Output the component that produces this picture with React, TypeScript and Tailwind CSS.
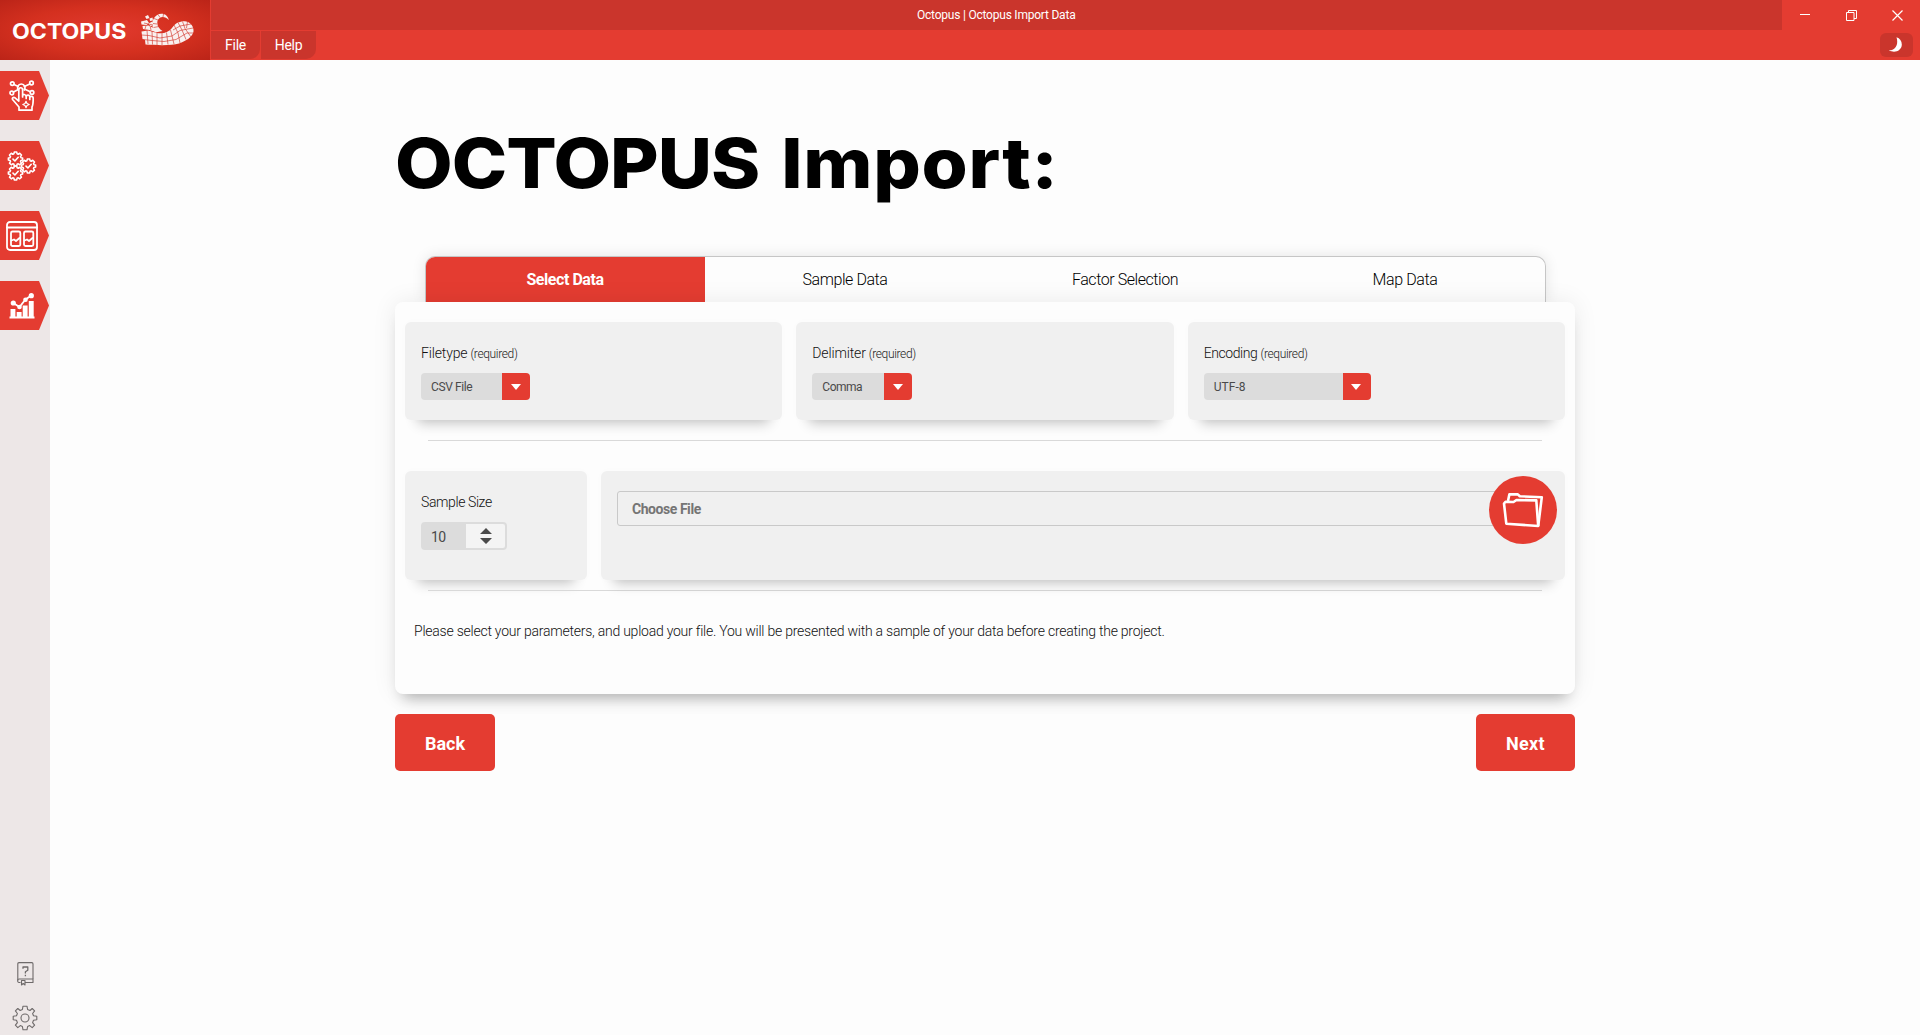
import type { ReactNode } from "react";

function Tentacle() {
  return (
    <svg width="54" height="33" viewBox="0 0 54 33" fill="none">
      <path
        d="M1.500 18.500 L8 17.500 L17 20 C24 21 29 19 32 15 C35 10 40 8 45 8.200 C51 9 54 14 53.500 18.500 C52.500 24 46 28 39 30.500 C32 32.500 20 32.500 5.500 31.500 L5 27 L2.500 26 Z"
        fill="#f9f0ef"
      />
      <path d="M28.800 7 C25 2.500 19 3 17.500 8 C16.500 12.500 19 15.500 22.500 18 L15.500 19.500 C12 15 11.500 10.500 13.300 6.500 C16.500 -1 27 -1.500 28.800 7 Z" fill="#f9f0ef" />
      <path d="M5 3.500 l3 -1.500 l1.500 3 l-3 1 Z M9.500 5.500 l3 -1 l.5 3 l-3 .5 Z M1 8.500 l6 -1.500 l2 3 l-2.500 2 l-5 -.5 Z M8.500 10.500 l4 -2 l1 3 l-3 2 Z M2.500 13 l6 -.5 l6 3 l1 3.500 l-6 -2 l-6.500 -1 Z" fill="#f9f0ef" />
      <path
        d="M1.500 22 L9 22.500 L20 25 L32 23 L40 17.500 L53 15 M3 26.500 L12 27.500 L24 28.500 L36 26.500 L47 20 L53 20 M7 17 L8 31 M12 18 L12.500 31.500 M17 19.500 L17 32 M22 20 L22 32 M26.500 19.500 L28 31.500 M30.500 17 L34 31 M34 12 L38 20 L40 30 M38 9.500 L42 17 L46 26.500 M42.500 8.500 L45 15.500 L51 24 M47.500 8.500 L46.500 15 M33 17 L40 13 L51 11 M13 10.500 L17 11 M14 5.500 L18 7 M18 1.500 L20 4.500 M23.500 .8 L23 4 M13.500 14.500 L19 13.500 M4 10 L13 12 M6 12.500 L5 16 M10 12.500 L11 17"
        stroke="#d2362b"
        strokeWidth=".65"
      />
    </svg>
  );
}

function TouchIcon() {
  return (
    <svg width="26" height="31" viewBox="0 0 26 31" fill="none" stroke="#fff" strokeWidth="1.700" strokeLinejoin="round" strokeLinecap="round">
      <circle cx="3.300" cy="3.600" r="1.800" />
      <circle cx="22.500" cy="3" r="1.800" />
      <circle cx="2.800" cy="13" r="1.800" />
      <circle cx="23" cy="12.500" r="1.800" />
      <path d="M9.300 10 C7.500 7.500 9 4 12.300 4 C15.600 4 17 7.500 15.300 10" />
      <path d="M5 4.600 L9.200 6.500 M20.800 4 L15.300 6.500 M4.500 12 L9.300 9.500 M21.300 11.700 L15.300 9" />
      <path d="M9.800 21 V10 C9.800 7 13.600 7 13.600 10 V17 M9.800 21 L6 17.800 C4.500 16.800 2.600 18 3.800 19.800 L10 27 V30.200 H23 V27 C24.200 25 24.200 22 24.200 18.500 C24.200 15.800 20.800 16 20.800 17.800 M20.800 19.500 V17 C20.800 14.500 17.200 14.500 17.200 17 V18.500 M17.200 17 C17 13.800 13.600 13.800 13.600 16" />
      <path d="M17 21.300 L18 23.500 L20.200 24.500 L18 25.500 L17 27.700 L16 25.500 L13.800 24.500 L16 23.500 Z" strokeWidth="1.200" />
    </svg>
  );
}

const COG = "M-1.500 -8.500 h3 l.4 2 l1.500 .7 l1.800 -1.200 l2.100 2.100 l-1.200 1.800 l.6 1.500 l2 .4 v2.400 l-2 .5 l-.6 1.500 l1.200 1.800 l-2.100 2.100 l-1.800 -1.200 l-1.500 .6 l-.4 2 h-3 l-.4 -2 l-1.500 -.6 l-1.800 1.200 l-2.100 -2.100 l1.200 -1.800 l-.6 -1.500 l-2 -.5 v-2.400 l2 -.4 l.6 -1.500 l-1.200 -1.800 l2.100 -2.100 l1.800 1.200 l1.500 -.7 Z";

function CogsIcon() {
  return (
    <svg width="30" height="30" viewBox="0 0 30 30" fill="none" stroke="#fff" strokeWidth="1.900" strokeLinejoin="round" strokeLinecap="round">
      {["translate(8.500 8)", "translate(8.500 22)", "translate(21.500 15)"].map((place) => (
        <g key={place} transform={place}>
          <path d={COG} transform="scale(.82)" />
          <path d="M-2.500 .1 L-.6 2 L2.700 -1.700" strokeWidth="1.600" />
        </g>
      ))}
    </svg>
  );
}

function WindowIcon() {
  return (
    <svg width="32" height="30" viewBox="0 0 32 30" fill="none" stroke="#fff" strokeWidth="1.800" strokeLinejoin="round" strokeLinecap="round">
      <rect x="1" y="1" width="30" height="28" rx="3" />
      <path d="M1 6.500 H31" />
      <rect x="5" y="10.500" width="9.300" height="14.500" rx="1.500" />
      <rect x="18" y="10.500" width="9.300" height="14.500" rx="1.500" />
      <path d="M5.500 19.500 L8 18.500 L10 20 L13.500 17 M18.500 19.500 L21 18.500 L23 20 L26.500 17" />
    </svg>
  );
}

function ChartIcon() {
  return (
    <svg width="26" height="26" viewBox="0 0 26 26" fill="#fff">
      <path d="M.5 23.500 H25.500 V25.500 H.5 Z M1.500 16 h4.900 v8 h-4.900 Z M7.700 19 h4.900 V24 h-4.900 Z M13.700 12.500 h4.900 V24 h-4.900 Z M19.800 8 h4.900 v16 h-4.900 Z" />
      <path d="M4.300 10 L10.500 14 L16.500 6.500 L22.300 2.500" fill="none" stroke="#fff" strokeWidth="1.800" />
      <circle cx="4.300" cy="10" r="2.600" />
      <circle cx="10.500" cy="14" r="2.300" />
      <circle cx="16.500" cy="6.700" r="2.300" />
      <circle cx="22.300" cy="2.700" r="2.600" />
    </svg>
  );
}

function ManualIcon() {
  return (
    <svg width="17" height="24" viewBox="0 0 17 24" fill="none" stroke="#6e6a6a" strokeWidth="1.100" strokeLinejoin="round">
      <path d="M3.500 20.500 H2 C.2 20.500 .2 17 2 17 H16 V20.500 H8" />
      <path d="M.8 18.500 V2 C.8 1 1.200 .6 2 .6 H14.800 C15.700 .6 16 1 16 2 V17" />
      <path d="M4.500 18.500 H8 V23 L6.200 21.500 L4.500 23 Z" />
      <path d="M6 6.800 V5 H10.800 V8.200 L8.400 9.800 V11.500 M8.400 12.800 V14.200" strokeWidth="1.300" />
    </svg>
  );
}

function GearIcon() {
  return (
    <svg width="26" height="26" viewBox="0 0 26 26" fill="none" stroke="#6e6a6a" strokeWidth="1.100" strokeLinejoin="round">
      <path d="M11 1.200 H15 L15.600 4.500 L18 5.500 L20.200 3.500 L22.600 5.900 L20.600 8.500 L21.500 10.700 L24.800 11.200 V14.800 L21.500 15.300 L20.600 17.600 L22.600 20.200 L20.200 22.600 L17.700 20.600 L15.600 21.500 L15 24.800 H11 L10.400 21.500 L8.300 20.600 L5.800 22.600 L3.400 20.200 L5.400 17.600 L4.500 15.300 L1.200 14.800 V11.200 L4.500 10.700 L5.400 8.500 L3.400 5.900 L5.800 3.500 L8.200 5.500 L10.400 4.500 Z" />
      <circle cx="13" cy="13" r="4" />
    </svg>
  );
}

function FolderIcon() {
  return (
    <svg width="42" height="36" viewBox="0 0 42 36" fill="none" stroke="#fff" strokeWidth="2.600" strokeLinejoin="round">
      <path d="M6 9 L7.400 2.200 L15.800 2.400 L17.800 4.300 L39.800 5.200 L36.200 34" />
      <path d="M2 11.500 L3.500 9.800 L11.500 10 L14.500 8 L34.300 8.400 L36.200 34 L4.300 31.700 Z" />
    </svg>
  );
}

function Header() {
  return (
    <header className="flex h-[60px] shrink-0 bg-[#e43c31] text-white">
      <div className="flex w-[210px] items-center bg-[radial-gradient(ellipse_at_center,#e23a2f_0%,#d4301f_55%,#bb2418_100%)] pl-3">
        <div className="w-[115px]">
          <span className="mt-[3px] inline-block origin-left scale-x-[1.1] font-['Inter'] text-[21px] leading-7 font-bold">OCTOPUS</span>
        </div>
        <div className="-mt-0.5 ml-[13px]">
          <Tentacle />
        </div>
      </div>
      <div className="ml-px flex min-w-0 flex-1 flex-col">
        <div className="flex h-[30px]">
          <div className="flex w-[1571px] items-center bg-[#ca352c] pl-[706px]">
            <span className="text-[12px] leading-4 tracking-[-0.22px]">Octopus | Octopus Import Data</span>
          </div>
          <div className="flex flex-1 items-center">
            <div className="flex w-[46px] justify-center">
              <svg width="10" height="10" viewBox="0 0 10 10"><path d="M0 4.500 H10" stroke="#fff" /></svg>
            </div>
            <div className="flex w-[46px] justify-center">
              <svg width="11" height="11" viewBox="0 0 11 11" fill="none" stroke="#fff"><path d="M.5 2.500 h7.500 v8 h-7.500 Z M2.500 2.500 V.5 H10.500 V8.500 H8" /></svg>
            </div>
            <div className="flex w-[46px] justify-center">
              <svg width="11" height="11" viewBox="0 0 11 11" stroke="#fff" strokeWidth="1.200"><path d="M.5 .5 L10.500 10.500 M10.500 .5 L.5 10.500" /></svg>
            </div>
          </div>
        </div>
        <div className="flex h-[30px] items-start text-[14px] leading-5 tracking-[-0.25px]">
          <div className="mt-px flex h-7 w-[49px] items-center justify-center rounded-br-[10px] bg-[#ca352c]">File</div>
          <div className="mt-px ml-px flex h-7 w-[55px] items-center justify-center rounded-br-[10px] bg-[#ca352c]">Help</div>
          <div className="mt-[3px] mr-[7px] ml-auto flex h-6 w-[33px] items-center justify-center rounded-[6px] bg-[#ca352c]">
            <svg width="15" height="16" viewBox="0 0 15 16" fill="#fff" className="-ml-0.5">
              <path d="M8.500 .3 C12 1.500 14 4.300 13.800 8 C13.400 13.500 7 16.800 .8 13.300 C6.500 13.800 11 8.500 8.500 .3 Z" />
            </svg>
          </div>
        </div>
      </div>
    </header>
  );
}

function Sidebar() {
  const icons = [<TouchIcon />, <CogsIcon />, <WindowIcon />, <ChartIcon />];
  return (
    <nav className="flex w-[50px] shrink-0 flex-col bg-[#ede7e7]">
      <div className="mt-[11px] flex flex-col gap-[21px]">
        {icons.map((icon, i) => (
          <div key={i} className="flex h-[49px] w-[49px] items-center bg-[#e43c31] [clip-path:polygon(0_0,39px_0,100%_50%,39px_100%,0_100%)]">
            <div className="flex w-[43px] justify-center">{icon}</div>
          </div>
        ))}
      </div>
      <div className="mt-auto mb-1 flex flex-col items-center gap-[19px]">
        <ManualIcon />
        <GearIcon />
      </div>
    </nav>
  );
}

function Card({ className, children }: { className: string; children: ReactNode }) {
  return (
    <div className={`rounded-[6px] bg-[#f0f0f0] shadow-[0_16px_12px_-13px_rgba(0,0,0,0.24),0_0_10px_rgba(0,0,0,0.015)] ${className}`}>
      {children}
    </div>
  );
}

function SelectField({ label, tracking, value, valueTracking, width }: { label: string; tracking: string; value: string; valueTracking: string; width: string }) {
  return (
    <Card className="h-[98px] flex-1 px-4 pt-[21px]">
      <div className="flex h-5 items-baseline gap-[3px] leading-5 whitespace-nowrap">
        <span className={`text-[14px] font-[350] text-[#111] ${tracking}`}>{label}</span>
        <span className="text-[12px] font-[350] tracking-[-0.36px] text-[#222]">(required)</span>
      </div>
      <div className={`mt-2.5 flex h-[27px] overflow-hidden rounded-[4px] ${width}`}>
        <div className={`flex flex-1 items-center bg-[#dcdcdc] pt-px pl-2.5 text-[12px] text-[#4a4a4a] ${valueTracking}`}>{value}</div>
        <div className="flex w-7 items-center justify-center bg-[#e43c31]">
          <svg width="10" height="6" viewBox="0 0 10 6" fill="#fff" className="-ml-px"><path d="M0 0 H10 L5 6 Z" /></svg>
        </div>
      </div>
    </Card>
  );
}

function Tabs() {
  const tabs = [
    ["Sample Data", "tracking-[-0.44px]"],
    ["Factor Selection", "tracking-[-0.44px]"],
    ["Map Data", "tracking-[-0.36px]"],
  ];
  return (
    <div className="mx-[30px] flex h-[46px] w-[1121px] overflow-hidden rounded-t-[10px] border border-b-0 border-[#c6c6c6] bg-[#fdfdfd] text-[16px] leading-6 font-[350] text-black shadow-[0_0_14px_rgba(0,0,0,0.1)]">
      <div className="-ml-px flex w-[280px] items-center justify-center bg-[#e43c31] font-bold tracking-[-0.45px] text-white">Select Data</div>
      {tabs.map(([name, tracking]) => (
        <div key={name} className={`flex flex-1 items-center justify-center ${tracking}`}>{name}</div>
      ))}
    </div>
  );
}

export default function App() {
  return (
    <div className="flex h-[1035px] w-[1920px] flex-col overflow-hidden bg-[#fdfdfd] font-['Roboto',sans-serif]">
      <Header />
      <div className="flex min-h-0 flex-1">
        <Sidebar />
        <main className="ml-[345px] w-[1180px]">
          <h1 className="mt-[58px] h-[84px] w-fit origin-left scale-x-[1.082] font-['Inter'] text-[69px] leading-[90px] font-extrabold whitespace-nowrap text-black">
            <span className="tracking-[-0.9px]">OCTOPUS</span> <span className="ml-[5px] tracking-[0.7px]">Import:</span>
          </h1>
          <div className="mt-[54px]">
            <Tabs />
          </div>
          <section className="relative flex h-[392px] flex-col rounded-[8px] bg-[#fdfdfd] px-2.5 pt-5 shadow-[0_12px_14px_-8px_rgba(0,0,0,0.28),0_0_24px_rgba(0,0,0,0.08)]">
            <div className="flex gap-3.5">
              <SelectField label="Filetype" tracking="tracking-[-0.15px]" value="CSV File" valueTracking="tracking-[-0.4px]" width="w-[109px]" />
              <SelectField label="Delimiter" tracking="tracking-[-0.15px]" value="Comma" valueTracking="tracking-[-0.5px]" width="w-[100px]" />
              <SelectField label="Encoding" tracking="tracking-[-0.42px]" value="UTF-8" valueTracking="tracking-[0.05px]" width="w-[167px]" />
            </div>
            <hr className="mx-[23px] mt-5 border-t border-[#d9d9d9]" />
            <div className="mt-[30px] flex gap-3.5">
              <Card className="h-[109px] w-[182px] px-4 pt-[21px]">
                <div className="h-5 text-[14px] leading-5 font-[350] tracking-[-0.4px] text-[#111]">Sample Size</div>
                <div className="mt-2.5 flex h-7 w-[86px] rounded-[4px] border-2 border-[#dcdcdc] bg-[#f4f4f4]">
                  <div className="flex w-[43px] items-center bg-[#dcdcdc] pt-0.5 pl-2 text-[14px] tracking-[-0.6px] text-[#4a4a4a]">10</div>
                  <div className="flex flex-1 items-center justify-center">
                    <svg width="12" height="16" viewBox="0 0 12 16" fill="#4a4a4a"><path d="M0 6 L6 0 L12 6 Z M0 10 H12 L6 16 Z" /></svg>
                  </div>
                </div>
              </Card>
              <Card className="relative h-[109px] flex-1 px-4 pt-5">
                <div className="flex h-[35px] w-[900px] items-center rounded-[3px] border border-[#c9c9c9] pt-px pl-3.5 text-[14px] font-bold tracking-[-0.45px] text-[#757575]">
                  Choose File
                </div>
                <div className="absolute top-[5px] right-2 flex size-[68px] items-center justify-center rounded-full bg-[#e43c31]">
                  <FolderIcon />
                </div>
              </Card>
            </div>
            <hr className="mx-[23px] mt-2.5 border-t border-[#d9d9d9]" />
            <p className="mt-[30px] pl-[9px] text-[14px] leading-5 font-[350] tracking-[-0.232px] whitespace-nowrap text-[#111]">
              Please select your parameters, and upload your file. You will be presented with a sample of your data before creating the project.
            </p>
          </section>
          <div className="mt-5 flex justify-between text-[18px] leading-6 font-bold text-white">
            <button className="h-[57px] w-[100px] rounded-[5px] bg-[#e43c31] pt-0.5">Back</button>
            <button className="h-[57px] w-[99px] rounded-[5px] bg-[#e43c31] pt-0.5 tracking-[0.3px]">Next</button>
          </div>
        </main>
      </div>
    </div>
  );
}
